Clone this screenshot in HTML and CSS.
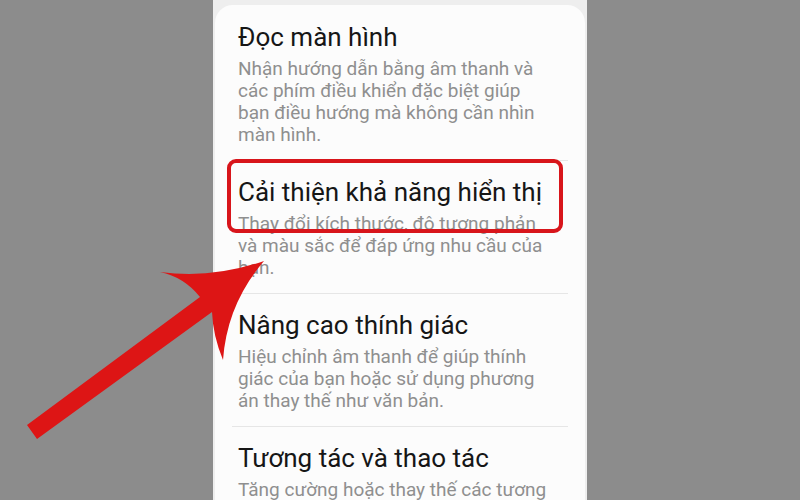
FILE: index.html
```html
<!DOCTYPE html>
<html lang="vi">
<head>
<meta charset="utf-8">
<title>Hỗ trợ</title>
<link rel="stylesheet" href="styles.css">
</head>
<body>
<div class="screen">
  <div class="card">
    <div class="item">
      <div class="title">Đọc màn hình</div>
      <div class="desc">Nhận hướng dẫn bằng âm thanh và<br>các phím điều khiển đặc biệt giúp<br>bạn điều hướng mà không cần nhìn<br>màn hình.</div>
    </div>
    <div class="item">
      <div class="highlight"></div>
      <div class="title">Cải thiện khả năng hiển thị</div>
      <div class="desc">Thay đổi kích thước, độ tương phản<br>và màu sắc để đáp ứng nhu cầu của<br>bạn.</div>
    </div>
    <div class="item">
      <div class="title">Nâng cao thính giác</div>
      <div class="desc">Hiệu chỉnh âm thanh để giúp thính<br>giác của bạn hoặc sử dụng phương<br>án thay thế như văn bản.</div>
    </div>
    <div class="item">
      <div class="title">Tương tác và thao tác</div>
      <div class="desc">Tăng cường hoặc thay thế các tương<br>tác và thao tác của bạn.</div>
    </div>
  </div>
</div>
<svg class="arrow" width="800" height="500" viewBox="0 0 800 500">
  <path d="M27 425 L200 297 Q184 277 160 272 Q212 279 264 261 Q227 304 223 360 Q213 336 212 312 L37 439 Z" fill="#dd1515"/>
</svg>
</body>
</html>
```
FILE: styles.css
```css
html, body {
  margin: 0;
  padding: 0;
}
body {
  position: relative;
  width: 800px;
  height: 500px;
  overflow: hidden;
  background: #8c8c8c;
  font-family: Roboto, "Noto Sans", "Liberation Sans", sans-serif;
}
.screen {
  margin-left: 213px;
  width: 374px;
  height: 500px;
  box-sizing: border-box;
  padding: 5px 2px 0;
  background: #eeeeee;
}
.card {
  background: #fcfcfc;
  border-radius: 18px 18px 0 0;
  padding: 1px 17px 0;
  height: 495px;
  box-sizing: border-box;
  overflow: hidden;
}
.item {
  position: relative;
  padding: 16px 6px 14px;
}
.item + .item {
  border-top: 1px solid #e6e6e6;
}
.title {
  font-size: 26px;
  line-height: 30px;
  color: #161616;
  margin-bottom: 6px;
  white-space: nowrap;
}
.desc {
  font-size: 19px;
  line-height: 22px;
  color: #8f8f8f;
  white-space: nowrap;
}
.highlight {
  position: absolute;
  top: -2px;
  left: -5px;
  width: 336px;
  height: 74px;
  box-sizing: border-box;
  border: 4px solid #d8151b;
  border-radius: 9px;
}
.arrow {
  position: absolute;
  top: 0;
  left: 0;
  pointer-events: none;
}
```
